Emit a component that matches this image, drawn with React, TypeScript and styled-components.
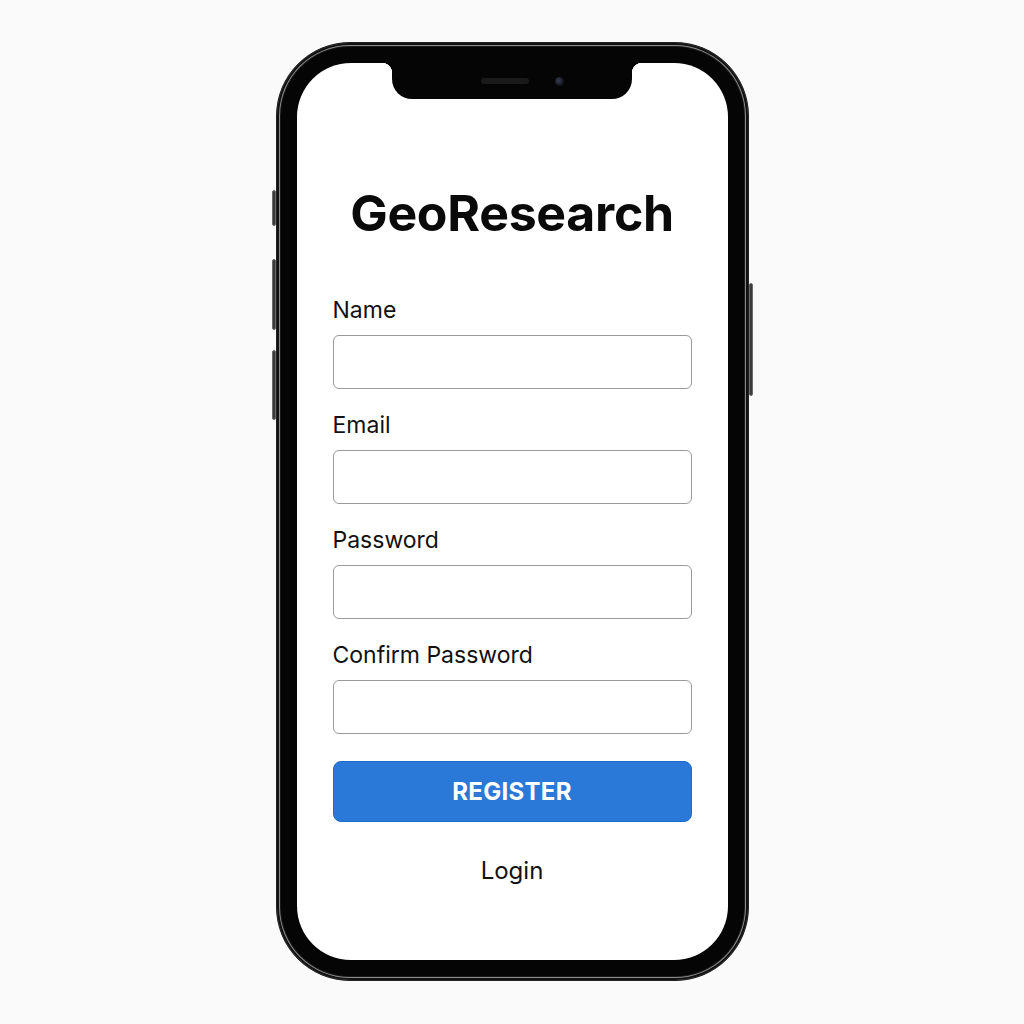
import React from "react";
import styled, { createGlobalStyle } from "styled-components";

const GlobalStyle = createGlobalStyle`
  html, body {
    margin: 0;
    padding: 0;
    background: #fafafa;
    font-family: Inter, "Noto Sans", "Liberation Sans", sans-serif;
  }
`;

const Stage = styled.div`
  width: 1024px;
  height: 1024px;
  display: flex;
  justify-content: center;
  padding-top: 42px;
  box-sizing: border-box;
`;

const Phone = styled.div`
  position: relative;
  width: 473px;
  height: 939px;
  box-sizing: border-box;
  padding: 20px;
  background: #050505;
  border: 1px solid #222;
  border-radius: 74px;
  box-shadow: inset 0 0 0 2px #111, inset 0 0 0 3px #8a8a8a, inset 0 0 0 4px #1a1a1a;
`;

const SideButton = styled.div<{ $side: "left" | "right"; $top: number; $h: number }>`
  position: absolute;
  ${(p) => (p.$side === "left" ? "left: -5px;" : "right: -5px;")}
  top: ${(p) => p.$top}px;
  width: 4px;
  height: ${(p) => p.$h}px;
  background: #3a3a3a;
  border-radius: 2px;
  border: 1px solid #6a6a6a;
  box-sizing: border-box;
`;

const Screen = styled.div`
  position: relative;
  height: 100%;
  background: #fff;
  border-radius: 54px;
  overflow: hidden;
  display: flex;
  flex-direction: column;
  align-items: center;
  padding: 120px 36px 0;
  box-sizing: border-box;
`;

const Notch = styled.div`
  position: absolute;
  top: 0;
  left: 50%;
  transform: translateX(-50%);
  width: 240px;
  height: 36px;
  background: #050505;
  border-radius: 0 0 20px 20px;
  display: flex;
  align-items: center;
  justify-content: center;
  gap: 26px;

  &::before,
  &::after {
    content: "";
    position: absolute;
    top: 0;
    width: 10px;
    height: 10px;
  }
  &::before {
    left: -10px;
    background: radial-gradient(circle at 0 100%, transparent 10px, #050505 10.5px);
  }
  &::after {
    right: -10px;
    background: radial-gradient(circle at 100% 100%, transparent 10px, #050505 10.5px);
  }
`;

const Speaker = styled.div`
  width: 48px;
  height: 6px;
  border-radius: 3px;
  background: #1a1a1a;
  margin-left: 20px;
`;

const Camera = styled.div`
  width: 9px;
  height: 9px;
  border-radius: 50%;
  background: radial-gradient(circle at 40% 40%, #3a3f55 0, #15161c 60%);
`;

const Title = styled.h1`
  margin: 0 0 54px;
  font-size: 50px;
  line-height: 60px;
  font-weight: 700;
  color: #0a0a0a;
  letter-spacing: -0.3px;
`;

const Form = styled.form`
  width: 100%;
  display: flex;
  flex-direction: column;
`;

const Field = styled.div`
  display: flex;
  flex-direction: column;
  margin-bottom: 23px;
`;

const Label = styled.label`
  font-size: 23px;
  line-height: 26px;
  color: #111;
  margin-bottom: 12px;
`;

const Input = styled.input`
  height: 54px;
  box-sizing: border-box;
  border: 1px solid #9a9a9a;
  border-radius: 6px;
  background: #fff;
  font-size: 20px;
  padding: 0 12px;
  outline: none;
`;

const RegisterButton = styled.button`
  margin-top: 4px;
  height: 61px;
  border: 1px solid #1f6bc9;
  border-radius: 8px;
  background: #2a78d7;
  color: #fff;
  font-family: inherit;
  font-size: 24px;
  font-weight: 700;
  letter-spacing: 0.3px;
  cursor: pointer;
`;

const LoginLink = styled.a`
  margin-top: 35px;
  align-self: center;
  font-size: 24px;
  line-height: 28px;
  color: #111;
  text-decoration: none;
  cursor: pointer;
`;

const fields = ["Name", "Email", "Password", "Confirm Password"];

export default function App() {
  return (
    <>
      <GlobalStyle />
      <Stage>
        <Phone>
          <SideButton $side="left" $top={147} $h={36} />
          <SideButton $side="left" $top={216} $h={71} />
          <SideButton $side="left" $top={307} $h={70} />
          <SideButton $side="right" $top={240} $h={113} />
          <Screen>
            <Notch>
              <Speaker />
              <Camera />
            </Notch>
            <Title>GeoResearch</Title>
            <Form onSubmit={(e) => e.preventDefault()}>
              {fields.map((f) => (
                <Field key={f}>
                  <Label>{f}</Label>
                  <Input type={f.includes("Password") ? "password" : "text"} />
                </Field>
              ))}
              <RegisterButton type="submit">REGISTER</RegisterButton>
              <LoginLink>Login</LoginLink>
            </Form>
          </Screen>
        </Phone>
      </Stage>
    </>
  );
}
